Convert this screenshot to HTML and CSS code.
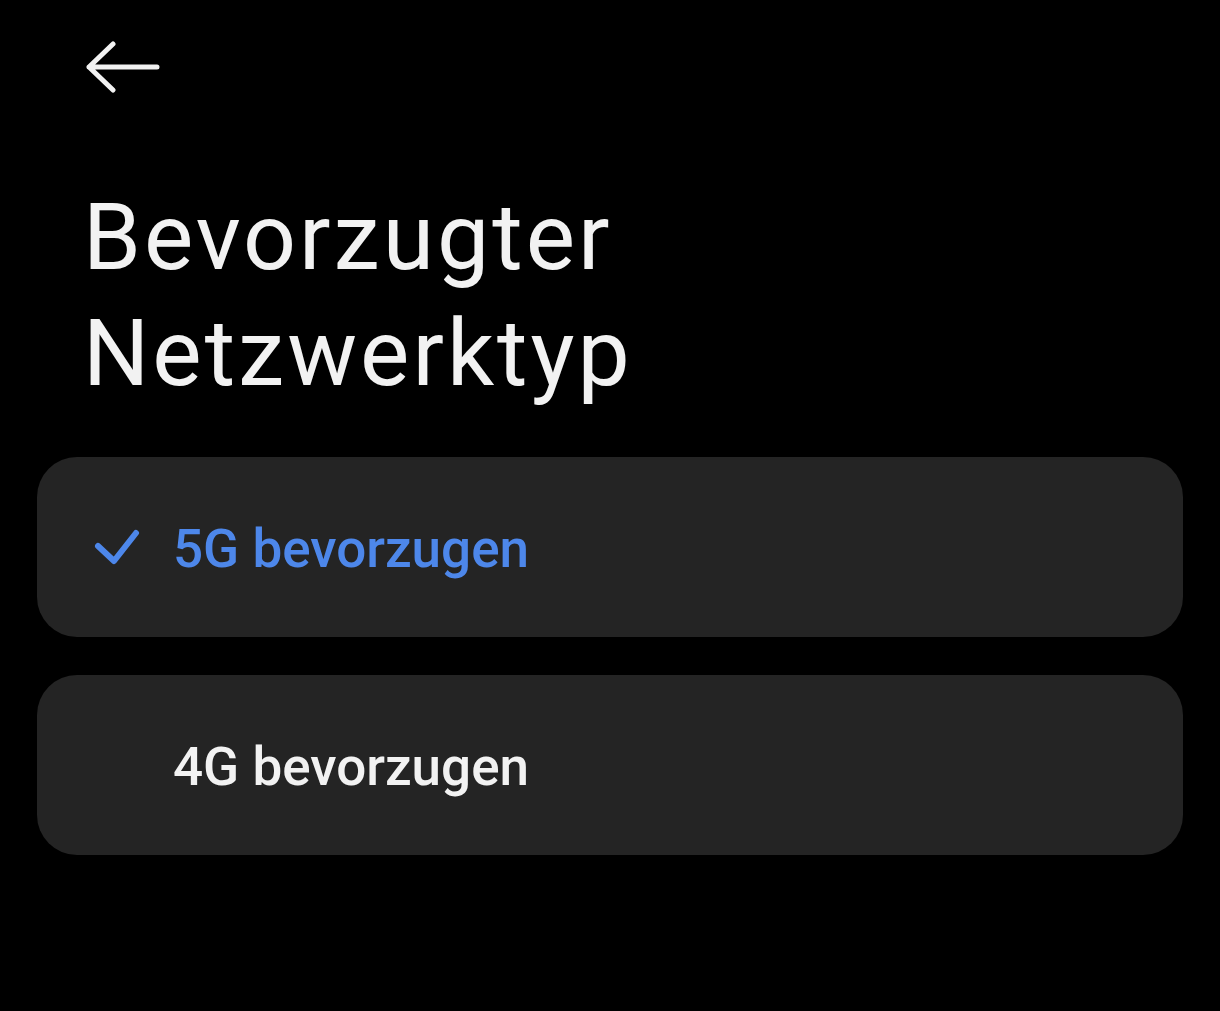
FILE: index.html
```html
<!DOCTYPE html>
<html lang="de">
<head>
    <meta charset="UTF-8">
    <meta name="viewport" content="width=device-width, initial-scale=1.0">
    <title>Bevorzugter Netzwerktyp</title>
    <link rel="stylesheet" href="styles.css">
</head>
<body>
<div class="toolbar">
    <button class="back" aria-label="Zurück">
        <svg width="76" height="56" viewBox="0 0 76 56">
            <path d="M72 26H4M28 3L4 26L28 49" fill="none" stroke="#f2f2f2" stroke-width="5" stroke-linecap="round" stroke-linejoin="round"/>
        </svg>
    </button>
</div>
<h1 class="title">Bevorzugter<br>Netzwerktyp</h1>
<div class="options">
    <div class="option selected">
        <span class="check">
            <svg width="48" height="40" viewBox="0 0 48 40">
                <path d="M5 19L21 34L43 6" fill="none" stroke="#4d87ea" stroke-width="6" stroke-linecap="round" stroke-linejoin="round"/>
            </svg>
        </span>
        <span class="label">5G bevorzugen</span>
    </div>
    <div class="option">
        <span class="check"></span>
        <span class="label">4G bevorzugen</span>
    </div>
</div>
</body>
</html>
```

FILE: styles.css
```css
body {
    margin: 0;
    background-color: #000;
    font-family: Roboto, "Noto Sans", sans-serif;
    color: #f2f2f2;
    height: 100vh;
    overflow: hidden;
}
.toolbar {
    padding: 41px 0 0 85px;
    height: 57px;
}
.back {
    background: none;
    border: none;
    padding: 0;
    display: block;
    cursor: pointer;
}
.title {
    margin: 82px 0 0 83px;
    font-size: 93px;
    font-weight: 400;
    line-height: 116px;
    letter-spacing: 3px;
}
.options {
    margin: 45px 37px 0;
    display: flex;
    flex-direction: column;
    gap: 38px;
}
.option {
    height: 180px;
    background-color: #242424;
    border-radius: 40px;
    display: flex;
    align-items: center;
    padding-left: 56px;
}
.check {
    width: 48px;
    height: 40px;
    margin-right: 32px;
    display: flex;
}
.label {
    font-size: 53px;
    font-weight: 500;
    color: #f2f2f2;
    padding-top: 4px;
}
.selected .label {
    color: #4d87ea;
}
```
